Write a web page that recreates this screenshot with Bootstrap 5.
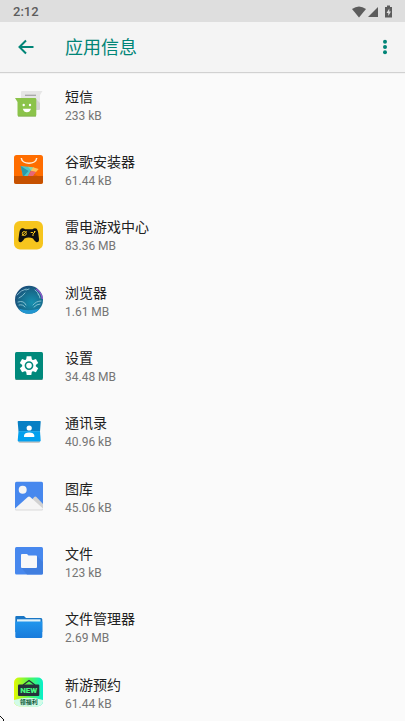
<!DOCTYPE html>
<html lang="zh-CN">
<head>
<meta charset="utf-8">
<meta name="viewport" content="width=device-width, initial-scale=1">
<title>应用信息</title>
<link href="https://cdn.jsdelivr.net/npm/bootstrap@5.3.0/dist/css/bootstrap.min.css" rel="stylesheet">
<style>
  body { font-family: Roboto, "Noto Sans CJK SC", sans-serif; background: #fafafa; color: #212121; }
  .status-bar { height: 22px; background: #dedede; color: #5c5c5c; font-size: 13px; line-height: 22px; padding: 1px 11px 0 13px; }
  .app-bar { height: 50px; background: #f4f4f4; color: #008577; padding: 0 12px 0 13px; box-shadow: 0 1px 1px rgba(0,0,0,.16); z-index: 1; }
  .app-bar button { width: 26px; height: 26px; color: inherit; }
  .app-title { font-size: 18px; line-height: 26px; margin-left: 26px; padding-top: 2px; }
  .app-scroll { scrollbar-width: none; }
  .app-scroll::-webkit-scrollbar { display: none; }
  .app-list { display: grid; grid-auto-rows: 1fr; min-height: calc(100vh - 68px); }
  .app-row { padding: 0 14px; gap: 21px; color: inherit; }
  .app-icon { width: 30px; height: 30px; flex: none; }
  .app-label { padding-top: 4px; }
  .app-name { font-size: 14px; line-height: 20px; }
  .app-size { font-size: 12px; line-height: 19px; color: #757575; }
  .pointer-tip { width: 5px; height: 5px; }
</style>
<script src="https://cdn.jsdelivr.net/npm/bootstrap@5.3.0/dist/js/bootstrap.bundle.min.js" defer></script>
</head>
<body>
<div class="vh-100 d-flex flex-column overflow-hidden position-relative">
  <div class="status-bar d-flex justify-content-between align-items-center fw-medium">
    <span>2:12</span>
    <svg width="44" height="16" viewBox="0 0 44 16" fill="#5c5c5c" aria-label="Wi-Fi、信号、充电中" role="img">
      <path d="M2 5Q9 0 16 5L9 13.500Z"/><path d="M28 3V13H18Z"/>
      <path d="M37 1.500h3V3h2v10.500h-7V3h2Z"/><path d="M39.300 4.500L36.500 9h1.800v3L41 7.500h-1.700Z" fill="#dedede"/>
    </svg>
  </div>
  <header class="app-bar d-flex align-items-center position-relative">
    <button class="btn p-0 border-0 d-flex align-items-center justify-content-center" type="button" aria-label="返回">
      <svg width="16" height="16" viewBox="0 0 16 16" fill="none" stroke="currentColor" stroke-width="2"><path d="M15.500 8H2M8 1.500L1.500 8L8 14.500"/></svg>
    </button>
    <h1 class="app-title mb-0 fw-normal">应用信息</h1>
    <button class="btn p-0 border-0 ms-auto d-flex align-items-center justify-content-end" type="button" aria-label="更多选项">
      <svg width="16" height="16" viewBox="0 0 16 16" fill="currentColor"><circle cx="8" cy="2.700" r="2"/><circle cx="8" cy="8" r="2"/><circle cx="8" cy="13.300" r="2"/></svg>
    </button>
  </header>
  <main class="app-scroll flex-grow-1 overflow-auto">
    <div class="app-list">
      <a href="#" class="app-row d-flex align-items-center text-decoration-none">
        <svg class="app-icon" viewBox="0 0 30 30" aria-hidden="true">
          <path d="M7 3Q7 2 8 2H28.500L26 6V19.500Q26 21 24.500 21H7Z" fill="#e6e6e6"/><path d="M22 10l4 4v5.500q0 1.500-1.500 1.500H22Z" fill="#d3d3d3"/>
          <path d="M11 6.300H22" stroke="#a6a6a6" stroke-width="1.300"/>
          <path d="M1 9H21Q22.300 9 22.300 10.300V26Q22.300 27.300 21 27.300H5Q3.500 27.300 3.500 26V13Z" fill="#8bc34a"/><path d="M4 27.300H22" stroke="#71a23b" stroke-width=".6"/>
          <circle cx="9.700" cy="16" r="1.200" fill="#fff"/><circle cx="16" cy="16" r="1.200" fill="#fff"/><path d="M8.800 19.700H17Q16 23.300 12.900 23.300T8.800 19.700Z" fill="#fff"/>
        </svg>
        <span class="app-label d-flex flex-column"><span class="app-name">短信</span><span class="app-size">233 kB</span></span>
      </a>
      <a href="#" class="app-row d-flex align-items-center text-decoration-none">
        <svg class="app-icon" viewBox="0 0 30 30" aria-hidden="true">
          <rect y="0" width="29" height="29" rx="2.500" fill="#ff6d00"/><path d="M9 20L6.500 11L24 21Z" fill="#e65e05"/>
          <path d="M7.300 3C8 10 22 10 22.700 3" fill="none" stroke="#fff0dc" stroke-width="1.500"/>
          <path d="M6.700 11L18.500 12.200L14 21H9Z" fill="#4fc5c7"/><path d="M6.700 11L14.500 16L10 21H9Z" fill="#299aac"/><path d="M14 11.800L20 12.500L17.500 16Z" fill="#91d5a4"/><path d="M19 12.300L24.700 14L22 17L17 16Z" fill="#ffc35b"/><path d="M17 16L22 17L19 21H14Z" fill="#e76677"/>
          <path d="M0 21H29V26.500Q29 29 26.500 29H2.500Q0 29 0 26.500Z" fill="#c65100"/>
        </svg>
        <span class="app-label d-flex flex-column"><span class="app-name">谷歌安装器</span><span class="app-size">61.44 kB</span></span>
      </a>
      <a href="#" class="app-row d-flex align-items-center text-decoration-none">
        <svg class="app-icon" viewBox="0 0 30 30" aria-hidden="true">
          <rect y="1" width="29" height="28.500" rx="6" fill="#f6c51d"/>
          <path d="M8 8.300Q9.800 8 11 9.200H18.500Q20 8 22 8.400Q23.500 8.700 24.200 12.500L25 19Q25.200 22.300 22.800 22.300Q21.500 22.300 19 18.500Q17 17.500 14.800 17.500T10.500 18.500Q8 22.300 6.600 22.300Q4.200 22.300 4.500 19L5.300 12.500Q6 8.700 8 8.300Z" fill="#101010"/>
          <g fill="none" stroke="#f6c51d" stroke-width="1"><circle cx="10.300" cy="13.500" r="2"/><path d="M8 15.800l4.600-4.600M16.700 12.500h2.500M18 15h2M20 11.500h1.500M19 14l2-2"/></g>
        </svg>
        <span class="app-label d-flex flex-column"><span class="app-name">雷电游戏中心</span><span class="app-size">83.36 MB</span></span>
      </a>
      <a href="#" class="app-row d-flex align-items-center text-decoration-none">
        <svg class="app-icon" viewBox="0 0 30 30" aria-hidden="true">
          <defs><radialGradient id="globe" cx=".6" cy=".6" r=".7"><stop stop-color="#1590b0"/><stop offset=".6" stop-color="#17698a"/><stop offset="1" stop-color="#1b4474"/></radialGradient></defs>
          <circle cx="15" cy="14.800" r="14" fill="url(#globe)"/>
          <path d="M4.500 23.500Q14 27 25.500 23.500Q22 28.800 15 28.800T4.500 23.500Z" fill="#2196d0"/>
          <path d="M22 4Q28 8 28.300 14" fill="none" stroke="#9a55d0" stroke-width="1.300"/>
          <g fill="none" stroke="#9bd0dd" stroke-width="1" stroke-linecap="round" opacity=".8"><path d="M3 10Q7 5 12 4M5 13Q9 11 11 8M12 5l3-1M4 17Q10 15 12 20M5 20Q9 19 11 22M21 5Q24 7 25 10M24 9q2 2 2 4M19 20Q22 16 27 16M20 22Q23 19 26 19"/></g>
        </svg>
        <span class="app-label d-flex flex-column"><span class="app-name">浏览器</span><span class="app-size">1.61 MB</span></span>
      </a>
      <a href="#" class="app-row d-flex align-items-center text-decoration-none">
        <svg class="app-icon" viewBox="0 0 30 30" aria-hidden="true">
          <rect x="1" y="1" width="28" height="27.500" rx="1.500" fill="#00897b"/><path d="M1.500 28.500h27" stroke="#00695c" stroke-width=".6"/>
          <g transform="translate(15 14.600)" fill="#fff"><circle r="6.800"/><g id="teeth"><path d="M-2.300-9.300H2.300L3-5H-3Z"/><path d="M-2.300 9.300H2.300L3 5H-3Z"/></g><use href="#teeth" transform="rotate(60)"/><use href="#teeth" transform="rotate(120)"/><circle r="3.600" fill="none" stroke="#00897b" stroke-width="1.600"/></g>
        </svg>
        <span class="app-label d-flex flex-column"><span class="app-name">设置</span><span class="app-size">34.48 MB</span></span>
      </a>
      <a href="#" class="app-row d-flex align-items-center text-decoration-none">
        <svg class="app-icon" viewBox="0 0 30 30" aria-hidden="true">
          <rect x="4.500" y="23" width="21.500" height="4" rx="1.500" fill="#c9c9c9"/>
          <path d="M4.500 5H26Q27 5 26.700 6L26 15.500H4.500L3.700 6Q3.500 5 4.500 5Z" fill="#087fc4"/>
          <path d="M4.500 15.300H26L26.700 24.500Q26.700 25.500 25.700 25.500H4.700Q3.700 25.500 3.700 24.500Z" fill="#03a0ee"/>
          <circle cx="15.200" cy="12" r="2.600" fill="#fff"/><path d="M10 21V19.500Q10.500 16.500 15.200 16.500T20.300 19.500V21Z" fill="#fff"/>
        </svg>
        <span class="app-label d-flex flex-column"><span class="app-name">通讯录</span><span class="app-size">40.96 kB</span></span>
      </a>
      <a href="#" class="app-row d-flex align-items-center text-decoration-none">
        <svg class="app-icon" viewBox="0 0 30 30" aria-hidden="true">
          <rect x="1" y=".7" width="28" height="28" rx="1.500" fill="#4788ee"/>
          <circle cx="8.700" cy="8.700" r="4" fill="#f5f5f5"/>
          <path d="M18.500 18L20.200 16Q21.300 15 22.400 16L29 23V28.500H12Z" fill="#d2d2d2"/><path d="M1 27.500L13.800 16Q15 15 16.200 16L29 27.500Q29 29 27.500 29H2.500Q1 29 1 27.500Z" fill="#f5f5f5"/><path d="M1.500 29h27" stroke="#c8c8c8" stroke-width=".6"/>
        </svg>
        <span class="app-label d-flex flex-column"><span class="app-name">图库</span><span class="app-size">45.06 kB</span></span>
      </a>
      <a href="#" class="app-row d-flex align-items-center text-decoration-none">
        <svg class="app-icon" viewBox="0 0 30 30" aria-hidden="true">
          <rect x="1" y="1" width="28" height="27.500" rx="1.500" fill="#4788ee"/><path d="M23 10l6 6V27q0 1.500-1.500 1.500H13L7.500 22Z" fill="#407edf"/>
          <path d="M8 8H13L14.500 9.500H22Q23 9.500 23 10.500V21Q23 22 22 22H8Q7 22 7 21V9Q7 8 8 8Z" fill="#f8f8f8"/>
        </svg>
        <span class="app-label d-flex flex-column"><span class="app-name">文件</span><span class="app-size">123 kB</span></span>
      </a>
      <a href="#" class="app-row d-flex align-items-center text-decoration-none">
        <svg class="app-icon" viewBox="0 0 30 30" aria-hidden="true">
          <defs><linearGradient id="folder" x2="0" y2="1"><stop stop-color="#2196ed"/><stop offset="1" stop-color="#197bdb"/></linearGradient></defs>
          <path d="M2.300 4H10L12 6H27Q28.300 6 28.300 7.500V20H1.300V5Q1.300 4 2.300 4Z" fill="#1976c5"/>
          <rect x="3" y="7.300" width="23.500" height="4" fill="#dff1f9"/><path d="M1.300 9.500H28.300V24.500Q28.300 26 27 26H2.500Q1.300 26 1.300 24.500Z" fill="url(#folder)"/>
        </svg>
        <span class="app-label d-flex flex-column"><span class="app-name">文件管理器</span><span class="app-size">2.69 MB</span></span>
      </a>
      <a href="#" class="app-row d-flex align-items-center text-decoration-none">
        <svg class="app-icon" viewBox="0 0 30 30" aria-hidden="true">
          <defs><linearGradient id="offer"><stop stop-color="#e5fa00"/><stop offset=".5" stop-color="#54f653"/><stop offset="1" stop-color="#00efd5"/></linearGradient><clipPath id="offerClip"><rect y=".6" width="29" height="28.700" rx="5"/></clipPath></defs>
          <g clip-path="url(#offerClip)"><rect width="30" height="30" fill="url(#offer)"/><path d="M0 23Q14.500 18.500 29 23V30H0Z" fill="#d1fbe8"/></g>
          <path d="M9 8L15 3.500L21 8" fill="none" stroke="#263238" stroke-width="1.300"/><rect x="4" y="7.600" width="21.300" height="11.400" rx="1" fill="#26313b"/>
          <text x="14.700" y="16.300" text-anchor="middle" font-family="Roboto, sans-serif" font-weight="900" font-size="8" fill="#45f77e">NEW</text>
          <text x="14.700" y="27.300" text-anchor="middle" font-family="Noto Sans CJK SC, sans-serif" font-weight="700" font-size="6" fill="#125b3b">领福利</text>
        </svg>
        <span class="app-label d-flex flex-column"><span class="app-name">新游预约</span><span class="app-size">61.44 kB</span></span>
      </a>
    </div>
  </main>
  <svg class="pointer-tip position-absolute bottom-0 start-0" viewBox="0 0 5 5" aria-hidden="true"><path d="M0 .5h1M1 1.500h1M2 2.500h1M3 3.500h1M3 4.500h1" stroke="#111" shape-rendering="crispEdges"/></svg>
</div>
</body>
</html>
